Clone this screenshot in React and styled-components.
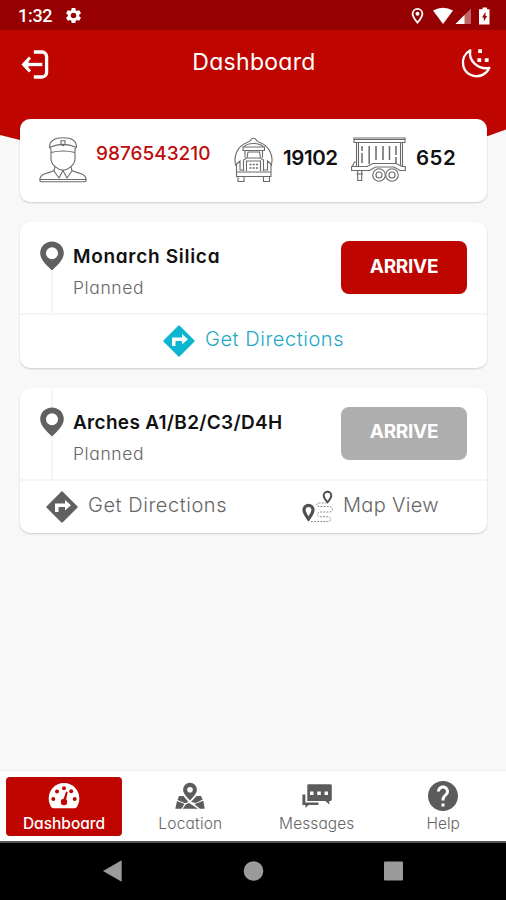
import styled, { createGlobalStyle } from 'styled-components';
import { MdSettings, MdHelp } from 'react-icons/md';

const GlobalStyle = createGlobalStyle`
  * {
    box-sizing: border-box;
  }
  body {
    margin: 0;
    background: #f8f8f8;
    font-family: 'Inter', 'Liberation Sans', sans-serif;
    font-feature-settings: 'cv11';
  }
  svg {
    display: block;
    flex: none;
  }
`;

const Screen = styled.div`
  position: relative;
  display: flex;
  flex-direction: column;
  width: 506px;
  height: 900px;
  overflow: hidden;
  background: #f8f8f8;
`;

const StatusBar = styled.div`
  display: flex;
  align-items: center;
  height: 30px;
  padding: 1px 15px 0 18px;
  background: #960000;
  color: #fff;
`;

const Clock = styled.span`
  width: 46px;
  font-family: 'Roboto', sans-serif;
  font-size: 18px;
  font-weight: 500;
  letter-spacing: -0.3px;
`;

const StatusIcons = styled.div`
  margin-left: auto;
`;

const Header = styled.header`
  position: relative;
  display: flex;
  justify-content: space-between;
  align-items: flex-start;
  height: 89px;
  padding: 17px 14px 0 21px;
  background: #be0500;
  color: #fff;
`;

const Wave = styled.svg`
  position: absolute;
  left: 0;
  top: 88px;
`;

const Title = styled.h1`
  margin: 0;
  padding-right: 1px;
  font-size: 23px;
  font-weight: 400;
  line-height: 31px;
  letter-spacing: 0.3px;
`;

const Main = styled.main`
  position: relative;
  flex: 1;
  padding: 0 19px 0 20px;
`;

const Card = styled.section`
  margin-bottom: 20px;
  border-radius: 10px;
  background: #fff;
  box-shadow: 0 1px 2px rgba(0, 0, 0, 0.18);
`;

const SummaryCard = styled(Card)`
  display: flex;
  align-items: flex-start;
  height: 83px;
  padding: 18px 0 0 19px;
`;

const Figure = styled.span`
  width: ${({ $width }) => $width}px;
  margin-left: ${({ $gap }) => $gap}px;
  color: ${({ $accent }) => ($accent ? '#be0c0c' : '#111')};
  font-size: ${({ $accent }) => ($accent ? '19px' : '20.5px')};
  font-weight: ${({ $accent }) => ($accent ? 500 : 600)};
  line-height: ${({ $accent }) => ($accent ? '33px' : '41px')};
  letter-spacing: ${({ $spacing }) => $spacing};
  white-space: nowrap;
`;

const StopCard = styled(Card)`
  height: 145.5px;
`;

const StopTop = styled.div`
  display: flex;
  height: 93px;
  padding: 0 20px;
  border-bottom: 2px solid #f5f5f5;
`;

const Track = styled.div`
  display: flex;
  flex-direction: column;
  align-items: center;
  width: 24px;
`;

const TrackLine = styled.div`
  width: 2px;
  height: ${({ $height }) => $height};
  flex: ${({ $height }) => ($height ? 'none' : 1)};
  background: ${({ $hidden }) => ($hidden ? 'transparent' : '#f5f5f5')};
`;

const StopInfo = styled.div`
  flex: 1;
  padding: 19px 0 0 9px;
`;

const StopName = styled.h2`
  margin: 0;
  color: #111;
  font-size: 19px;
  font-weight: 600;
  line-height: 31px;
  letter-spacing: ${({ $spacing }) => $spacing};
  white-space: nowrap;
`;

const StopStatus = styled.p`
  margin: 0;
  color: #666;
  font-size: 17.5px;
  font-weight: 300;
  line-height: 31px;
  letter-spacing: 0.6px;
`;

const ArriveButton = styled.button`
  width: 126px;
  height: 53px;
  margin-top: 19px;
  padding: 0 0 3px;
  border: 0;
  border-radius: 8px;
  background: ${({ disabled }) => (disabled ? '#aeaeae' : '#be0500')};
  color: #fff;
  font-family: inherit;
  font-size: 19px;
  font-weight: 700;
  letter-spacing: -0.3px;
`;

const StopActions = styled.div`
  display: flex;
  height: 52px;
  padding: ${({ $single }) => ($single ? '0 0 0 143px' : '0 0 0 26px')};
  align-items: center;
`;

const Action = styled.a`
  display: flex;
  align-items: center;
  width: ${({ $width }) => $width}px;
  gap: ${({ $gap }) => $gap}px;
  color: ${({ $active }) => ($active ? '#22a9c5' : '#666')};
  white-space: nowrap;

  svg {
    color: ${({ $active }) => ($active ? '#0cb5d0' : '#606060')};
  }
`;

const ActionText = styled.span`
  padding-bottom: 4px;
  font-size: 20px;
  font-weight: 300;
  letter-spacing: ${({ $spacing }) => $spacing};
`;

const TabBar = styled.nav`
  display: grid;
  grid-template-columns: 116px 116px 116px 116px;
  column-gap: 10.4px;
  height: 71px;
  padding: 6px 0 0 6px;
  border-top: 1px solid #eee;
  background: #fff;
`;

const Tab = styled.a`
  display: flex;
  flex-direction: column;
  align-items: center;
  height: 59px;
  border-radius: 4px;
  background: ${({ $active }) => ($active ? '#be0500' : 'transparent')};
  color: ${({ $active }) => ($active ? '#fff' : '#666')};
  font-size: 15.5px;
  font-weight: ${({ $active }) => ($active ? 500 : 300)};
  letter-spacing: ${({ $spacing }) => $spacing};
`;

const TabIcon = styled.span`
  display: flex;
  align-items: center;
  justify-content: center;
  height: 38px;
  color: ${({ $active }) => ($active ? '#fff' : '#5c5c5c')};
`;

const TabLabel = styled.span`
  line-height: 17px;
`;

const SystemBar = styled.div`
  display: flex;
  align-items: center;
  height: 59px;
  padding: 0 0 2px 103px;
  border-top: 2px solid #555;
  background: #000;
`;

const PinIcon = () => (
  <svg width="24" height="30" viewBox="0 0 24 30">
    <path
      fill="#606060"
      fillRule="evenodd"
      d="M12 .5C5.4.5.2 5.6.2 12c0 6.8 6.300 12 11.800 17.500C17.500 24 23.800 18.800 23.800 12 23.800 5.600 18.600.5 12 .5Zm0 5.700a6 6 0 1 1 0 12 6 6 0 0 1 0-12Z"
    />
  </svg>
);

const DirectionsIcon = () => (
  <svg width="32" height="32" viewBox="0 0 32 32">
    <path
      d="M16 1 31 16 16 31 1 16Z"
      fill="currentColor"
      stroke="currentColor"
      strokeWidth="1.500"
      strokeLinejoin="round"
    />
    <path d="M9 21v-8.500h10V9l6 5.200-6 5.200V16h-6.500v5Z" fill="#fff" />
  </svg>
);

const LogoutIcon = () => (
  <svg width="28" height="36" viewBox="0 0 28 36" fill="none" stroke="#fff" strokeWidth="3.300">
    <path d="M12.800 5h8.200a4.600 4.600 0 0 1 4.600 4.600v15.800a4.600 4.600 0 0 1-4.600 4.600h-8.200" />
    <path d="M21.300 17.500H4" />
    <path d="M9 10.500 2.500 17.500 9 24.500" strokeWidth="3" />
    <path d="M3 17.500 7.500 13v9Z" fill="#fff" stroke="none" />
  </svg>
);

const MoonIcon = () => (
  <svg width="32" height="34" viewBox="0 0 32 34">
    <path
      d="M10.300 3.300C4.500 6.500 1.800 12.500 3.300 19c2.500 10 15 13.500 22.500 6.700 1.600-1.300 2.800-3 3.500-4.800C18.500 23 8 14 10.300 3.300Z"
      fill="none"
      stroke="#fff"
      strokeWidth="2.400"
      strokeLinejoin="round"
    />
    <path d="M18.200 2.200h3.800v3.800h-3.800zM17.400 11.200h3.800v3.800h-3.800zM24.800 11.200h3.800v3.800h-3.800z" fill="#fff" />
  </svg>
);

const SignalIcons = () => (
  <svg width="80" height="18" viewBox="0 0 80 18" fill="#fff">
    <path
      fillRule="evenodd"
      d="M6.500 1A5.800 5.800 0 0 0 .7 6.800C.7 11 6.500 17 6.500 17s5.800-6 5.800-10.200A5.800 5.800 0 0 0 6.500 1Zm0 1.800a4 4 0 0 1 4 4c0 2.300-2.300 5.400-4 7.500-1.700-2.100-4-5.200-4-7.500a4 4 0 0 1 4-4Z"
    />
    <circle cx="6.500" cy="6.800" r="2" />
    <path d="M22 3.500Q32 -1.800 42 3.500L32 17Z" />
    <path d="M60 1.500V17H44.500Z" opacity=".4" />
    <path d="M53.500 8V17H44.500Z" />
    <path
      fillRule="evenodd"
      d="M71.500.5h4.500v1.800h2.500V17.500H68V2.300h3.500ZM74.500 5l-3.500 5.500h1.800v4l3.300-5.500h-1.600Z"
    />
  </svg>
);

const DriverIcon = () => (
  <svg width="48" height="46" viewBox="0 0 48 46" fill="none" stroke="#6a6a6a" strokeWidth="1.100">
    <path d="M12 15.500V12L10.500 10C10.500 3.500 16 .8 24 .8S37.500 3.500 37.500 10L36 12v3.500" />
    <path d="M10.800 10.200Q24 4.500 37.200 10.200M12 15.500Q24 12.500 36 15.500" />
    <path d="M22 3.700h4v3.600l-2 1.500-2-1.500ZM12 15.500V22c0 5.500 7 11.300 12 11.300S36 27.500 36 22v-6.500" />
    <path d="M16 29.500 15 34l5 7 4-7.500 4 7.500 5-7-1-4.500" />
    <path d="M15 33.500C11 36.500.8 35.500.8 43q0 1.800 1.500 1.800h43.400q1.500 0 1.500-1.800c0-7.500-10.200-6.500-14.200-9.500M1 42.500h46" />
  </svg>
);

const TankerIcon = () => (
  <svg width="40" height="46" viewBox="0 0 40 46" fill="none" stroke="#6a6a6a" strokeWidth="1.100">
    <path d="M2 29A18.700 18.700 0 0 1 13 5.500q3.500-.8 4-3 2-2.500 5 0 .5 2.200 4 3a18.700 18.700 0 0 1 11 23.500" />
    <path d="M10 10Q12.500 6.500 19.500 6.500T29.500 10" />
    <path d="M9 10h21.500v3.500H9zM11 13.500v7M28.500 13.500v7M13 21l1-6h11.500l1 6M9.500 34V23l3-2h14l3 2v11M12.500 34V24h14v10" />
    <path d="M2.500 35v-8l3.500-3v9h3.500M37 35v-8l-3.500-3v9H30M2.500 35h34.500v4.500H2.500zM4 39.500h6v5H4zM29.500 39.500h6v5h-6z" />
    <path d="M15.500 27.500h8.500M15.500 31h8.500" strokeDasharray="2 1.200" strokeWidth="1.500" />
  </svg>
);

const TrailerIcon = () => (
  <svg width="55" height="46" viewBox="0 0 55 46" fill="none" stroke="#6a6a6a" strokeWidth="1.100">
    <path d="M3 1h51v4.500H3zM5.500 5.500V29M51.500 5.500V29M7.500 5.500V29M49.500 5.500V29M3 2.500h51" />
    <path d="M11 9v5m0 2v10M18.200 9v18M25 9v14M32 9v14M38.500 9v14M45 9v9m0 2v7" strokeWidth="1.500" />
    <path d="M.6 29.500h15.500l6-3h23l6 3h3.200v4H49l-6-3.500H24.500l-6 3.500H.6ZM1.500 29l2-4h2" />
    <path d="M6.700 33.500h4v10h-4zM5.500 37h6.500" />
    <circle cx="28" cy="38" r="6.300" fill="#fff" />
    <circle cx="41" cy="38" r="6.300" fill="#fff" />
    <circle cx="28" cy="38" r="3" />
    <circle cx="41" cy="38" r="3" />
  </svg>
);

const RouteIcon = () => (
  <svg width="32" height="34" viewBox="0 0 32 34" fill="none" stroke="#505050">
    <path d="M6.500 29C4 25.500 2 23 2 19.800a4.500 4.500 0 0 1 9 0C11 23 9 25.500 6.500 29Z" strokeWidth="3.200" />
    <path d="M25.500 12.300C23.500 10 21.700 8 21.700 5.600a3.800 3.800 0 0 1 7.600 0C29.300 8 27.500 10 25.500 12.300Z" strokeWidth="2" />
    <path
      d="M9 31.500h17c4 0 3-4.800 0-4.800h-7.500c-4 0-4-4.700 0-4.700H27c4.500 0 4.500-5.500 0-5.500H17c-3 0-3-3.500 0-3.500h7"
      strokeDasharray="1.800 1.300"
      strokeWidth="1"
      stroke="#888"
    />
  </svg>
);

const GaugeIcon = () => (
  <svg width="32" height="28" viewBox="0 0 32 28">
    <path d="M16 1C7.500 1 .7 7.800.7 16.200c0 3.300.9 6.300 2.500 8.800q.9 1.300 2.300 1.300h21q1.400 0 2.300-1.300c1.600-2.500 2.500-5.500 2.500-8.800C31.300 7.800 24.500 1 16 1Z" fill="#fff" />
    <g fill="#be0500">
      <circle cx="5.300" cy="17" r="2" />
      <circle cx="9" cy="9.500" r="2" />
      <circle cx="16" cy="6.200" r="2" />
      <circle cx="23.200" cy="9.300" r="2" />
      <circle cx="26.700" cy="17" r="2" />
      <circle cx="16" cy="20" r="3.200" />
      <path d="m14.900 19 3.200-9.500 1.600.5-2 9.500Z" />
    </g>
  </svg>
);

const MapPinIcon = () => (
  <svg width="30" height="28" viewBox="0 0 30 28" fill="currentColor">
    <path
      fillRule="evenodd"
      d="M15 .8a6.900 6.900 0 0 0-6.900 6.900c0 3.900 4 7.500 6.900 10.800 2.900-3.300 6.900-6.900 6.900-10.800A6.900 6.900 0 0 0 15 .8Zm0 4.200a2.800 2.800 0 1 1 0 5.600A2.800 2.800 0 0 1 15 5Z"
    />
    <path d="M4 14h4.500l5 6L10 21.300 2.500 18ZM21.500 14H26l1.700 3.500-6.700 3.500-5-1ZM2 19l7.500 3-3 4.800H.3ZM28.300 18.800 29.700 26.800H25l-5.500-4.500ZM14 21l9 5.800H7.700l3.300-4.500Z" />
  </svg>
);

const MessagesIcon = () => (
  <svg width="30" height="26" viewBox="0 0 30 26" fill="currentColor">
    <path
      fillRule="evenodd"
      d="M6.500 1.300h22q1.300 0 1.300 1.300v14q0 1.300-1.300 1.300h-1.200v3.500l-4-3.500H5.300V2.600q0-1.300 1.200-1.300ZM8 8.500v3.500h3.500V8.500Zm7.300 0v3.500h3.500V8.500Zm7.200 0v3.500H26V8.500Z"
    />
    <path d="M.4 11.500h3v8h13V22H6.500l-3 3v-3H.4Z" />
  </svg>
);

const NavKeys = () => (
  <svg width="302" height="24" viewBox="0 0 302 24" fill="#9b9b9b">
    <path d="M0 12 18.700 1.300V22.700Z" />
    <circle cx="150.500" cy="12" r="9.800" />
    <rect x="281" y="2.500" width="19" height="19" rx="1" />
  </svg>
);

const stops = [
  { name: 'Monarch Silica', spacing: '0.7px', enabled: true },
  { name: 'Arches A1/B2/C3/D4H', spacing: '0.3px', enabled: false },
];

const tabs = [
  { label: 'Dashboard', icon: <GaugeIcon />, spacing: '0px', active: true },
  { label: 'Location', icon: <MapPinIcon />, spacing: '0.2px' },
  { label: 'Messages', icon: <MessagesIcon />, spacing: '0.1px' },
  { label: 'Help', icon: <MdHelp size={36} />, spacing: '0px' },
];

function Stop({ name, spacing, enabled }) {
  return (
    <StopCard>
      <StopTop>
        <Track>
          <TrackLine $height="19px" $hidden={enabled} />
          <PinIcon />
          <TrackLine />
        </Track>
        <StopInfo>
          <StopName $spacing={spacing}>{name}</StopName>
          <StopStatus>Planned</StopStatus>
        </StopInfo>
        <ArriveButton disabled={!enabled}>ARRIVE</ArriveButton>
      </StopTop>
      <StopActions $single={enabled}>
        <Action $active={enabled} $width={256} $gap={10}>
          <DirectionsIcon />
          <ActionText $spacing="0.55px">Get Directions</ActionText>
        </Action>
        {!enabled && (
          <Action $gap={9}>
            <RouteIcon />
            <ActionText $spacing="0.3px">Map View</ActionText>
          </Action>
        )}
      </StopActions>
    </StopCard>
  );
}

function App() {
  return (
    <>
      <GlobalStyle />
      <Screen>
        <StatusBar>
          <Clock>1:32</Clock>
          <MdSettings size={19} />
          <StatusIcons>
            <SignalIcons />
          </StatusIcons>
        </StatusBar>

        <Header>
          <Wave width="506" height="50" viewBox="0 0 506 50">
            <path d="M0 0H506V11.500L488 18Q250 60 20 22L0 17Z" fill="#be0500" />
          </Wave>
          <LogoutIcon />
          <Title>Dashboard</Title>
          <MoonIcon />
        </Header>

        <Main>
          <SummaryCard>
            <DriverIcon />
            <Figure $accent $width={138} $gap={9} $spacing="0px">
              9876543210
            </Figure>
            <TankerIcon />
            <Figure $width={68} $gap={9} $spacing="-0.4px">
              19102
            </Figure>
            <TrailerIcon />
            <Figure $width={50} $gap={10} $spacing="0.5px">
              652
            </Figure>
          </SummaryCard>
          {stops.map((stop) => (
            <Stop key={stop.name} {...stop} />
          ))}
        </Main>

        <TabBar>
          {tabs.map(({ label, icon, spacing, active }) => (
            <Tab key={label} $active={active} $spacing={spacing}>
              <TabIcon $active={active}>{icon}</TabIcon>
              <TabLabel>{label}</TabLabel>
            </Tab>
          ))}
        </TabBar>
        <SystemBar>
          <NavKeys />
        </SystemBar>
      </Screen>
    </>
  );
}

export default App;
